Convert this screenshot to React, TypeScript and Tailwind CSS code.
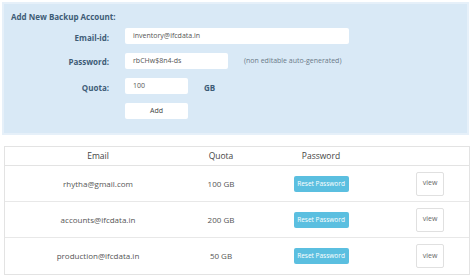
import React from "react";

const rows = [
  { email: "rhytha@gmail.com", quota: "100 GB" },
  { email: "accounts@ifcdata.in", quota: "200 GB" },
  { email: "production@ifcdata.in", quota: "50 GB" },
];

export default function App() {
  return (
    <div className="w-[474px] h-[279px] bg-white font-['Open_Sans',sans-serif] pt-[2px] overflow-hidden">
      <div className="ml-[2px] w-[467px] border-2 border-[#e6f0f9] bg-[#d9e9f6] pl-[7px] pt-[7px] pb-[14px]">
        <div className="text-[8px] leading-[12px] font-bold text-[#3e5c76]">Add New Backup Account:</div>
        <div className="mt-[5px] flex flex-col gap-[9px]">
          <div className="flex items-center">
            <div className="w-[98px] text-right text-[8px] font-bold text-[#3e5c76] pt-[3px]">Email-id:</div>
            <div className="ml-[16px] w-[224px] h-[16px] bg-white rounded-[2px] flex items-center pl-[8px] text-[7px] text-[#555]">inventory@ifcdata.in</div>
          </div>
          <div className="flex items-center">
            <div className="w-[98px] text-right text-[8px] font-bold text-[#3e5c76] pt-[2px]">Password:</div>
            <div className="ml-[16px] w-[103px] h-[16px] bg-white rounded-[2px] flex items-center pl-[8px] text-[7px] text-[#555]">rbCHw$8n4-ds</div>
            <div className="ml-[16px] text-[7px] text-[#6b7a88]">(non editable auto-generated)</div>
          </div>
          <div className="flex items-center">
            <div className="w-[98px] text-right text-[8px] font-bold text-[#3e5c76] pt-[3px]">Quota:</div>
            <div className="ml-[16px] w-[63px] h-[16px] bg-white rounded-[2px] flex items-center pl-[8px] text-[7px] text-[#555]">100</div>
            <div className="ml-[16px] text-[8px] font-bold text-[#3e5c76] pt-[3px]">GB</div>
          </div>
          <div className="flex items-center">
            <div className="w-[98px]" />
            <div className="ml-[16px] w-[63px] h-[16px] bg-white rounded-[2px] flex items-center justify-center text-[7px] text-[#444]">Add</div>
          </div>
        </div>
      </div>

      <div className="ml-[4px] mt-[11px] w-[466px] border border-[#e3e3e3]">
        <div className="grid grid-cols-[186px_60px_140px_78px] h-[19px] items-center border-b border-[#e3e3e3] text-[8.5px] text-[#444]">
          <div className="text-center">Email</div>
          <div className="text-center">Quota</div>
          <div className="text-center">Password</div>
          <div />
        </div>
        {rows.map((r, i) => (
          <div
            key={r.email}
            className={`grid grid-cols-[186px_60px_140px_78px] h-[36px] items-center text-[8px] text-[#555] ${i < rows.length - 1 ? "border-b border-[#e8e8e8]" : ""}`}
          >
            <div className="text-center">{r.email}</div>
            <div className="text-center">{r.quota}</div>
            <div className="flex justify-center">
              <div className="w-[55px] h-[16px] rounded-[2px] bg-[#5bbfe0] text-white text-[6.5px] flex items-center justify-center">Reset Password</div>
            </div>
            <div className="flex justify-center">
              <div className="w-[28px] h-[24px] border border-[#e0e0e0] rounded-[2px] bg-white text-[7px] text-[#666] flex items-center justify-center">view</div>
            </div>
          </div>
        ))}
      </div>
    </div>
  );
}
